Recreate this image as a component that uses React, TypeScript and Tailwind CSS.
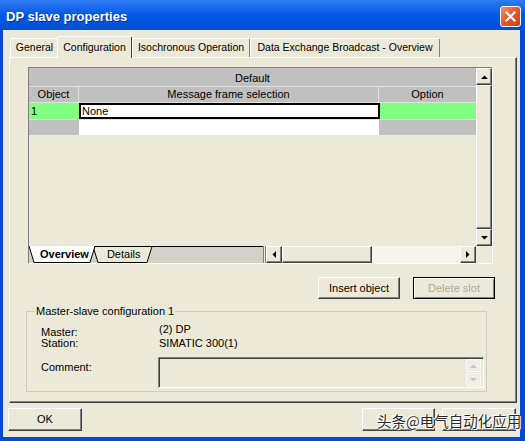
import React from 'react'

// Win XP "DP slave properties" dialog, Configuration tab

const raised =
  'border border-t-white border-l-white border-r-[#404040] border-b-[#404040] shadow-[inset_-1px_-1px_0_#808080]'
const sunken =
  'border border-t-[#808080] border-l-[#808080] border-r-white border-b-white shadow-[inset_1px_1px_0_#404040]'

type Dir = 'up' | 'down' | 'left' | 'right'

function Tri({ dir, color = '#000' }: { dir: Dir; color?: string }) {
  const vert = dir === 'up' || dir === 'down'
  const pts = {
    up: '0,4 7,4 3.5,0.5',
    down: '0,0 7,0 3.5,3.5',
    left: '4,0 4,7 0.5,3.5',
    right: '0,0 0,7 3.5,3.5',
  }[dir]
  return (
    <svg width={vert ? 7 : 4} height={vert ? 4 : 7} viewBox={vert ? '0 0 7 4' : '0 0 4 7'}>
      <polygon points={pts} fill={color} />
    </svg>
  )
}

function ScrollBtn({ dir, className = '' }: { dir: Dir; className?: string }) {
  return (
    <div className={`${raised} flex items-center justify-center bg-[#ece9d8] ${className}`}>
      <Tri dir={dir} />
    </div>
  )
}

const TABS = [
  { label: 'General', w: 'w-[49px]' },
  { label: 'Configuration', w: 'w-[75px]', active: true },
  { label: 'Isochronous Operation', w: 'w-[118px]' },
  { label: 'Data Exchange Broadcast - Overview', w: 'w-[190px]' },
]

function SheetTabs() {
  return (
    <div className="relative h-[17px] w-[234px] bg-[#d4d0c8]">
      <svg className="absolute inset-0" width="234" height="17" viewBox="0 0 234 17">
        <line x1="0" y1="0.5" x2="234" y2="0.5" stroke="#000" />
        <polygon points="64,0.5 69,16.5 118,16.5 123,0.5" fill="#ece9d8" stroke="#000" />
        <polygon points="0,0 5,16.5 61,16.5 66,0" fill="#fff" />
        <polyline points="0,0 5,16.5 61,16.5 66,0" fill="none" stroke="#000" />
      </svg>
      <div className="relative flex h-full items-center">
        <span className="ml-[11px] text-[11px] font-bold leading-none">Overview</span>
        <span className="ml-[18px] text-[11px] leading-none">Details</span>
      </div>
    </div>
  )
}

function Grid() {
  return (
    <div className="ml-[18px] mt-[9px] flex h-[197px] w-[465px] flex-col border border-b-white border-l-[#808080] border-r-white border-t-[#808080]">
      <div className="flex h-[178px]">
        <div className="flex w-[447px] flex-col">
          <div className="flex h-[19px] items-center justify-center border-b border-[#e0e0e0] bg-[#c0c0c0] pt-[2px]">
            Default
          </div>
          <div className="flex h-[16px] border-b border-[#e0e0e0] bg-[#c0c0c0]">
            <div className="flex w-[50px] items-center justify-center border-r border-[#e0e0e0]">Object</div>
            <div className="flex w-[300px] items-center justify-center border-r border-[#e0e0e0]">
              Message frame selection
            </div>
            <div className="flex flex-1 items-center justify-center">Option</div>
          </div>
          <div className="flex h-[16px]">
            <div className="flex w-[50px] items-center bg-[#80ff80] pl-[2px]">1</div>
            <div className="flex w-[301px] items-center border-2 border-black bg-white pl-[1px]">None</div>
            <div className="flex-1 bg-[#80ff80]" />
          </div>
          <div className="flex h-[16px] border-t border-[#e0e0e0]">
            <div className="w-[50px] bg-[#c0c0c0]" />
            <div className="w-[300px] bg-white" />
            <div className="flex-1 bg-[#c0c0c0]" />
          </div>
          <div className="flex-1 bg-[#ece9d8]" />
        </div>
        <div className="flex w-[16px] flex-col bg-[#ece9d8]">
          <ScrollBtn dir="up" className="h-[17px]" />
          <div className={`${raised} flex-1 bg-[#ece9d8]`} />
          <ScrollBtn dir="down" className="h-[17px]" />
        </div>
      </div>
      <div className="flex h-[17px]">
        <SheetTabs />
        <div className="w-[3px] border-x border-[#808080] bg-[#ece9d8]" />
        <div className="flex w-[210px]">
          <ScrollBtn dir="left" className="w-[16px]" />
          <div className={`${raised} w-[90px] bg-[#ece9d8]`} />
          <div className="w-[88px] bg-[#f5f4ee]" />
          <ScrollBtn dir="right" className="w-[16px]" />
        </div>
        <div className="flex-1 bg-[#ece9d8]" />
      </div>
    </div>
  )
}

function MasterSlave() {
  return (
    <fieldset className="ml-[16px] mt-[6px] h-[87px] w-[461px] border border-[#cfccbd] pl-[14px]">
      <legend className="ml-[-6px] px-[1px] text-[11px] leading-[13px]">Master-slave configuration 1</legend>
      <div className="mt-[3px] flex">
        <div className="mt-[6px] flex w-[118px] flex-col text-[11px] leading-[11px]">
          <span>Master:</span>
          <span>Station:</span>
        </div>
        <div className="mt-[1px] flex flex-col text-[11px] leading-[14px]">
          <span>(2) DP</span>
          <span>SIMATIC 300(1)</span>
        </div>
      </div>
      <div className="mt-[7px] flex">
        <span className="mt-[4px] w-[117px] text-[11px] leading-[13px]">Comment:</span>
        <div className={`${sunken} flex h-[31px] w-[326px] justify-end bg-[#ece9d8] pr-[2px] pt-[1px]`}>
          <div className="flex w-[15px] flex-col gap-[1px]">
            <div className="flex h-[13px] items-center justify-center border border-[#f8f8f4] bg-[#eeede6]">
              <Tri dir="up" color="#c8c6bc" />
            </div>
            <div className="flex h-[13px] items-center justify-center border border-[#f8f8f4] bg-[#eeede6]">
              <Tri dir="down" color="#c8c6bc" />
            </div>
          </div>
        </div>
      </div>
    </fieldset>
  )
}

export default function App() {
  return (
    <div className="relative flex h-[441px] w-[525px] flex-col bg-[#0848cf] font-['Liberation_Sans',Arial,sans-serif] text-[11px] text-black">
      {/* title bar */}
      <div className="flex h-[30px] items-center justify-between bg-gradient-to-b from-[#2f7bf2] via-[#0058e6] to-[#0450d6] pl-[6px] pr-[4px] pt-[3px]">
        <span className="text-[13px] font-bold text-white [text-shadow:1px_1px_0_#0a2f94]">DP slave properties</span>
        <button className="flex h-[21px] w-[21px] items-center justify-center rounded-[3px] border border-white bg-gradient-to-br from-[#f08b6a] via-[#e4582c] to-[#cc3f18]">
          <svg width="11" height="11" viewBox="0 0 11 11">
            <path d="M1.5 1.5 L9.5 9.5 M9.5 1.5 L1.5 9.5" stroke="#fff" strokeWidth="2.2" strokeLinecap="square" />
          </svg>
        </button>
      </div>

      <div className="mb-[4px] ml-[3px] mr-[5px] flex flex-1 flex-col bg-[#ece9d8]">
        {/* tabs */}
        <div className="ml-[7px] mt-[6px] flex h-[21px] items-end text-[10.5px]">
          {TABS.map((t) =>
            t.active ? (
              <div
                key={t.label}
                className={`relative z-10 -mb-px -ml-[2px] flex h-[22px] ${t.w} items-start justify-center rounded-t-[2px] border border-b-0 border-l-white border-r-[#404040] border-t-white bg-[#ece9d8] pt-[3px]`}
              >
                {t.label}
              </div>
            ) : (
              <div
                key={t.label}
                className={`flex h-[19px] ${t.w} items-center justify-center rounded-t-[2px] border border-b-0 border-l-white border-r-[#808080] border-t-white`}
              >
                {t.label}
              </div>
            ),
          )}
        </div>

        {/* tab page */}
        <div className="ml-[6px] flex h-[346px] w-[508px] flex-col border border-b-[#404040] border-l-white border-r-[#404040] border-t-white shadow-[inset_-1px_-1px_0_#808080]">
          <Grid />
          <div className="mr-[21px] mt-[13px] flex justify-end gap-[13px]">
            <button className={`${raised} h-[22px] w-[82px] bg-[#ece9d8] text-[11px]`}>Insert object</button>
            <button className="h-[22px] w-[82px] border border-black bg-[#ece9d8] text-[11px] text-[#aca899] shadow-[inset_1px_1px_0_#fff,inset_-1px_-1px_0_#808080]">
              Delete slot
            </button>
          </div>
          <MasterSlave />
        </div>

        {/* dialog buttons */}
        <div className="ml-[5px] mr-[4px] mt-[5px] flex">
          <button className={`${raised} h-[23px] w-[74px] bg-[#ece9d8] text-[11px]`}>OK</button>
          <div className="ml-auto flex gap-[7px]">
            <button className={`${raised} h-[23px] w-[73px] bg-[#ece9d8]`} />
            <button className={`${raised} h-[23px] w-[74px] bg-[#ece9d8]`} />
          </div>
        </div>
      </div>

      {/* watermark over the buttons */}
      <span className="absolute left-[377px] top-[411px] font-['Noto_Sans_CJK_SC',sans-serif] text-[14.5px] leading-[20px] text-[#2a2a2a] [text-shadow:0_0_1px_#fff,1px_1px_0_#fff,-1px_-1px_0_#fff]">
        头条@电气自动化应用
      </span>
    </div>
  )
}
